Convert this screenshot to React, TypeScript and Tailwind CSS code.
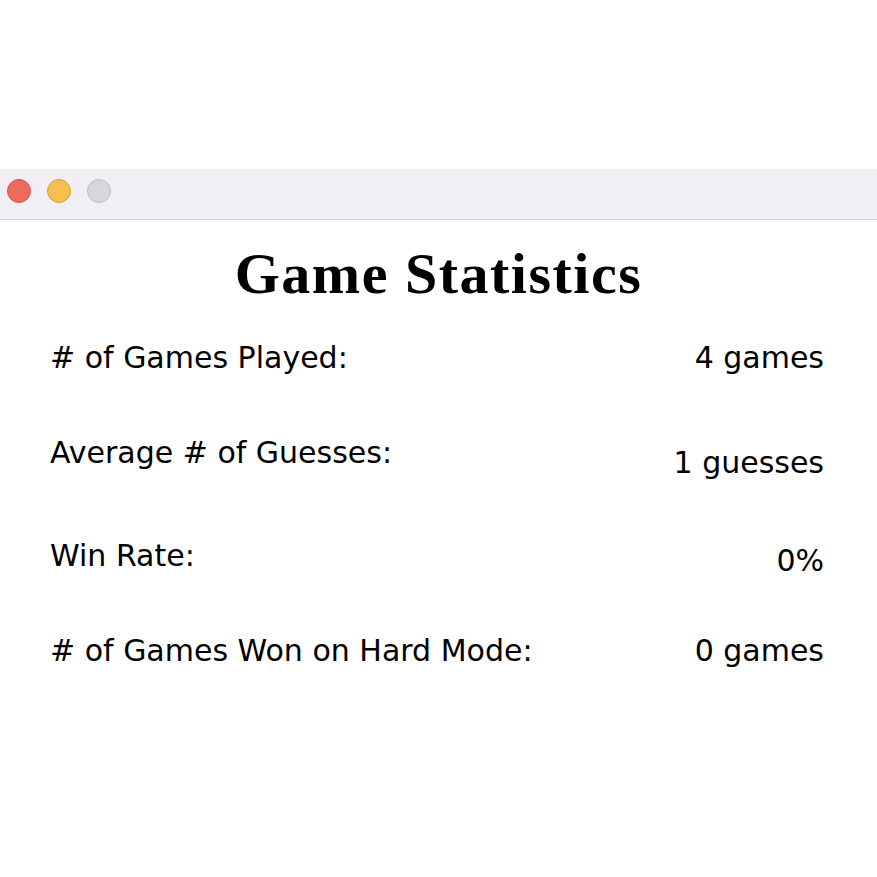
export default function App() {
  const rows = [
    { label: "# of Games Played:", value: "4 games", shift: "mt-0", height: "h-[95px]" },
    { label: "Average # of Guesses:", value: "1 guesses", shift: "mt-[10px]", height: "h-[103px]" },
    { label: "Win Rate:", value: "0%", shift: "mt-[5px]", height: "h-[95px]" },
    { label: "# of Games Won on Hard Mode:", value: "0 games", shift: "mt-0", height: "h-[40px]" },
  ];

  return (
    <div className="w-[877px] h-[877px] bg-white pt-[169px]">
      <div className="h-[51px] bg-[#f2eef6] border-b border-[#d6d3d9] flex items-start gap-4 pl-[7px] pt-[10px]">
        <span className="w-6 h-6 rounded-full bg-[#ec6a5e] border border-[#d3574c]" />
        <span className="w-6 h-6 rounded-full bg-[#f4bf4f] border border-[#d6a23a]" />
        <span className="w-6 h-6 rounded-full bg-[#d8d5dc] border border-[#bdbac1]" />
      </div>
      <h1
        className="text-center text-[58px] font-bold text-black leading-none tracking-[1.5px] mt-[25px]"
        style={{ fontFamily: '"Liberation Serif", serif' }}
      >
        Game Statistics
      </h1>
      <div
        className="pl-[50px] pr-[53px] mt-[38px] text-[30px] text-black leading-[34px]"
        style={{ fontFamily: '"DejaVu Sans", sans-serif' }}
      >
        {rows.map((r) => (
          <div key={r.label} className={`flex justify-between items-start ${r.height}`}>
            <span>{r.label}</span>
            <span className={r.shift}>{r.value}</span>
          </div>
        ))}
      </div>
    </div>
  );
}
